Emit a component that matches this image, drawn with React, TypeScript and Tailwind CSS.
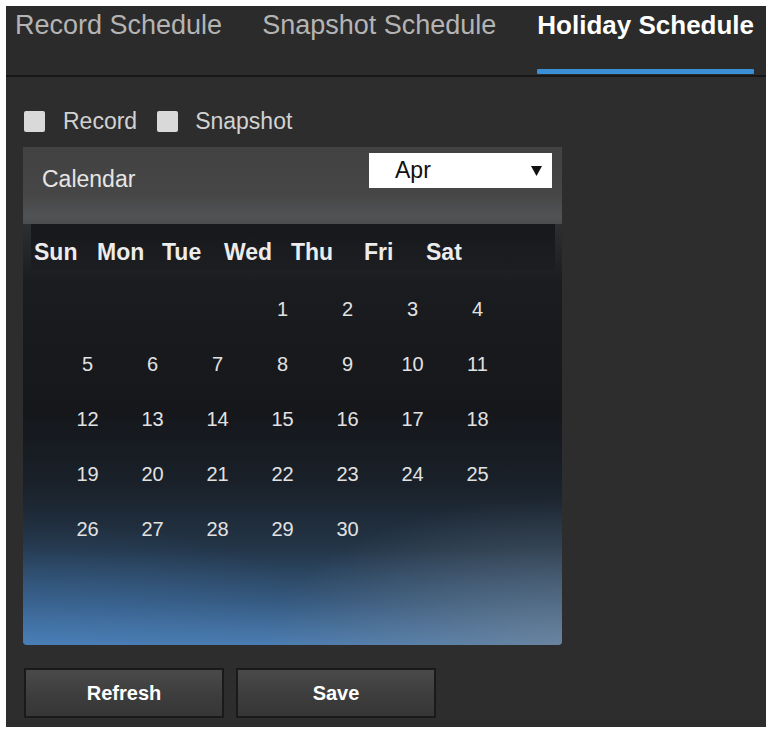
import React from "react";

const days: (number | null)[][] = [
  [null, null, null, 1, 2, 3, 4],
  [5, 6, 7, 8, 9, 10, 11],
  [12, 13, 14, 15, 16, 17, 18],
  [19, 20, 21, 22, 23, 24, 25],
  [26, 27, 28, 29, 30, null, null],
];

const weekNames: { n: string; w: string }[] = [
  { n: "Sun", w: "w-[63px]" },
  { n: "Mon", w: "w-[65px]" },
  { n: "Tue", w: "w-[62px]" },
  { n: "Wed", w: "w-[67px]" },
  { n: "Thu", w: "w-[73px]" },
  { n: "Fri", w: "w-[62px]" },
  { n: "Sat", w: "w-[60px]" },
];

function Checkbox() {
  return <div className="w-[21px] h-[21px] rounded-[2px] bg-[#d9d9d9] shrink-0" />;
}

export default function App() {
  return (
    <div
      className="w-[768px] h-[729px] bg-white pt-[6px] pl-[6px] overflow-hidden"
      style={{ fontFamily: '"Liberation Sans", Arial, sans-serif' }}
    >
      <div className="w-[760px] h-[721px] bg-[#2d2d2d]">
        {/* Tabs */}
        <div className="h-[71px] border-b-2 border-[#171717] bg-[#2b2b2b] flex items-stretch pl-[9px]">
          <div className="pt-[3px] text-[27px] leading-[32px] text-[#b4b4b4]">Record Schedule</div>
          <div className="pt-[3px] ml-[40px] text-[27px] leading-[32px] text-[#b4b4b4]">Snapshot Schedule</div>
          <div className="ml-[41px] flex flex-col justify-between">
            <div className="pt-[3px] text-[26px] leading-[32px] font-bold text-white">Holiday Schedule</div>
            <div className="h-[5px] mb-[1px] bg-[#3b8fd6] rounded-[1px]" />
          </div>
        </div>

        {/* Body */}
        <div className="pl-[17px] pt-[34px]">
          <div className="flex items-center ml-[1px] h-[21px]">
            <Checkbox />
            <span className="ml-[18px] text-[23px] leading-[23px] text-[#d2d2d2]">Record</span>
            <div className="ml-[20px]">
              <Checkbox />
            </div>
            <span className="ml-[17px] text-[23px] leading-[23px] text-[#d2d2d2]">Snapshot</span>
          </div>

          {/* Calendar panel */}
          <div className="mt-[15px] w-[539px] h-[498px] rounded-b-[4px] overflow-hidden flex flex-col">
            <div className="h-[77px] bg-[linear-gradient(180deg,#424242_0%,#464646_60%,#505254_90%,#4a4c4e_100%)] flex justify-between items-start pl-[19px] pr-[10px] pt-[6px]">
              <div className="mt-[9px] text-[23px] leading-normal text-[#e6e6e6]">Calendar</div>
              <div className="w-[183px] h-[35px] bg-white flex items-center justify-between pl-[26px] pr-[10px]">
                <span className="text-[23px] leading-none text-[#111]">Apr</span>
                <svg width="11" height="10" viewBox="0 0 11 10">
                  <polygon points="0,0 11,0 5.5,10" fill="#111" />
                </svg>
              </div>
            </div>
            <div className="flex-1 bg-[radial-gradient(ellipse_55%_35%_at_100%_100%,rgba(135,140,145,0.5),transparent),radial-gradient(ellipse_60%_30%_at_0%_100%,rgba(70,130,195,0.35),transparent),linear-gradient(180deg,#2c2e31_0%,#1a1c1f_14%,#15171b_45%,#1a212a_62%,#233548_77%,#35597f_90%,#4b7cb0_100%)]">
              <div className="ml-[8px] mr-[7px] h-[46px] bg-[linear-gradient(180deg,#16181b_0%,#1c1e22_100%)] pl-[3px] pt-[17px] flex">
                {weekNames.map((d) => (
                  <span key={d.n} className={`${d.w} text-[23px] leading-[23px] font-bold text-[#ececec]`}>
                    {d.n}
                  </span>
                ))}
              </div>
              <div className="ml-[32px] mt-[12px] grid grid-cols-[repeat(7,65px)]">
                {days.flat().map((d, i) => (
                  <div key={i} className="h-[55px] leading-[55px] text-center text-[20px] text-[#e2e2e2]">
                    {d ?? ""}
                  </div>
                ))}
              </div>
            </div>
          </div>

          {/* Buttons */}
          <div className="mt-[23px] ml-[1px] flex gap-[12px]">
            <button className="w-[200px] h-[50px] border-2 border-[#1a1a1a] bg-[linear-gradient(180deg,#4a4a4a_0%,#3e3e3e_50%,#363636_100%)] text-white font-bold text-[20px]">
              Refresh
            </button>
            <button className="w-[200px] h-[50px] border-2 border-[#1a1a1a] bg-[linear-gradient(180deg,#4a4a4a_0%,#3e3e3e_50%,#363636_100%)] text-white font-bold text-[20px]">
              Save
            </button>
          </div>
        </div>
      </div>
    </div>
  );
}
